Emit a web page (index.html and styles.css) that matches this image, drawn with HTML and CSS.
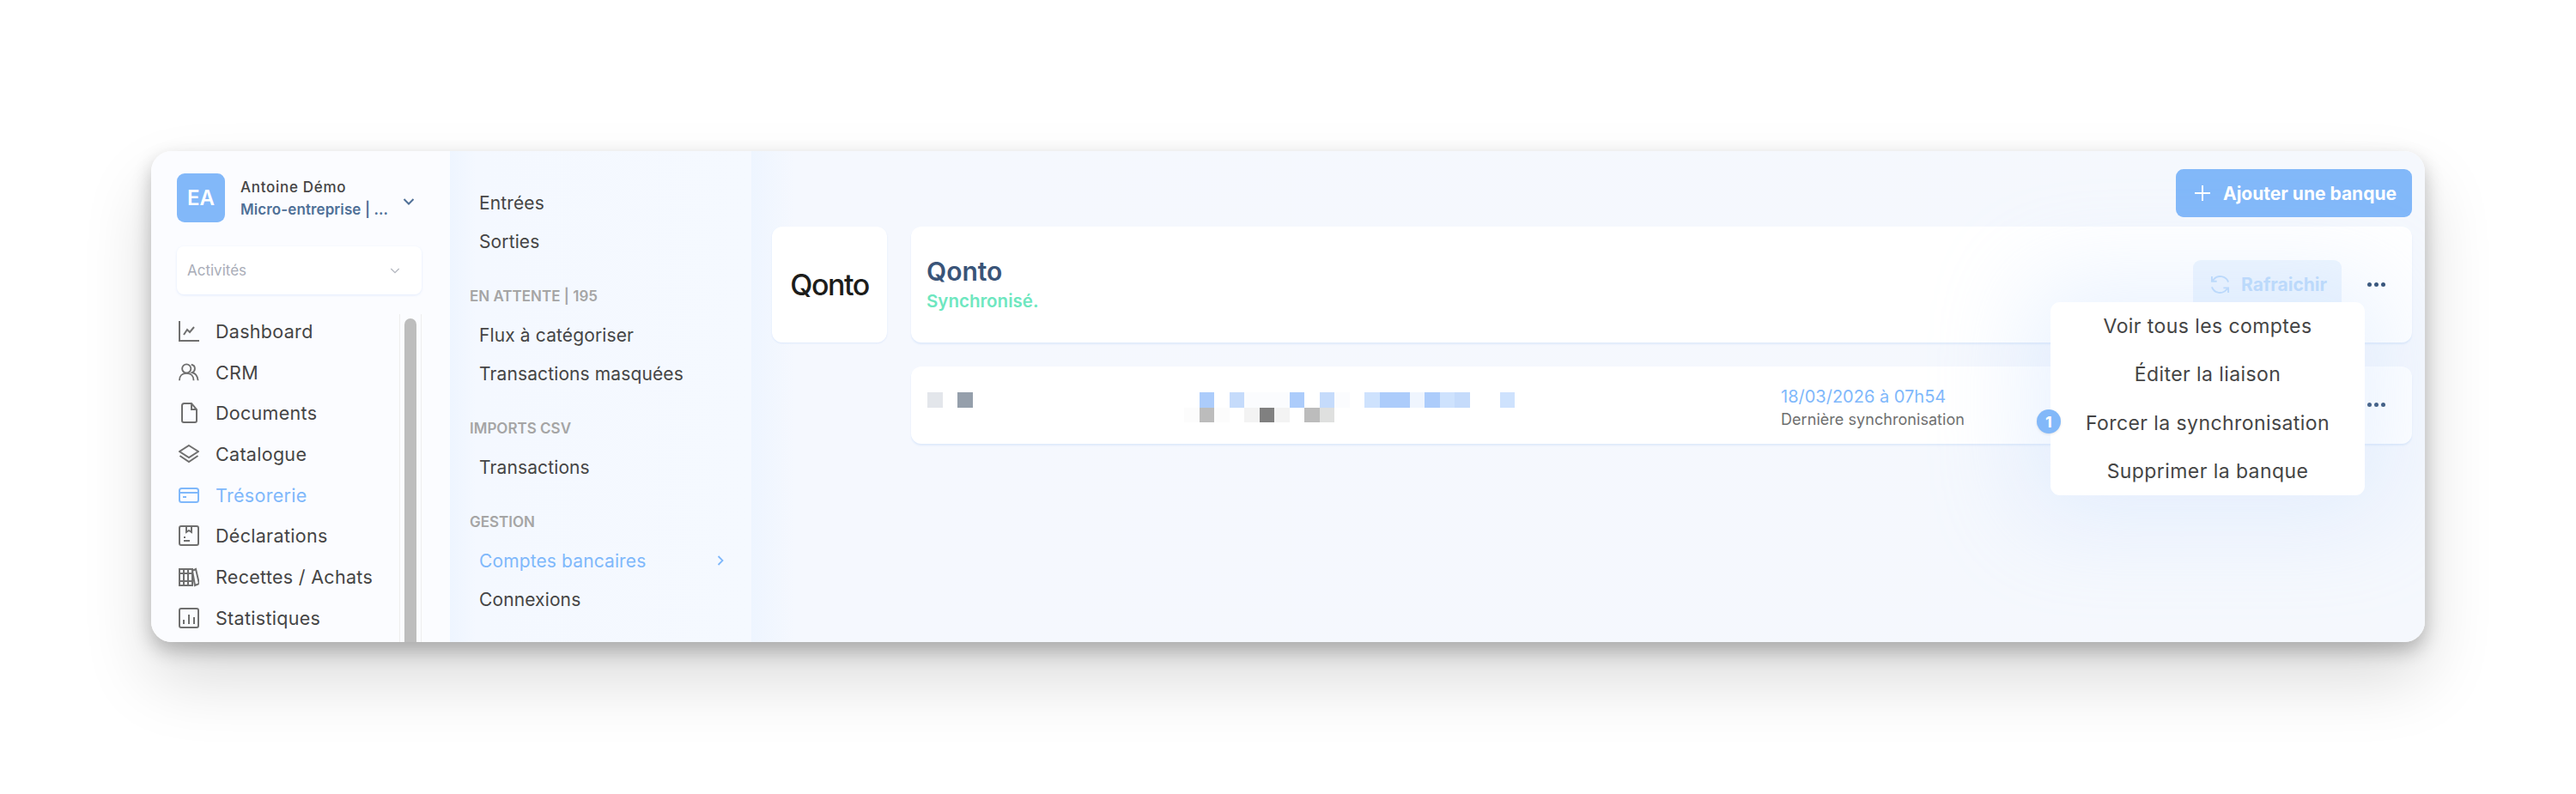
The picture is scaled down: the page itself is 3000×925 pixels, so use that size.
FILE: index.html
```html
<!DOCTYPE html>
<html lang="fr">
<head>
    <meta charset="UTF-8">
    <title>Comptes bancaires</title>
    <link rel="stylesheet" href="styles.css">
</head>
<body>
    <div class="window">
    <div class="app">
        <aside class="sidebar">
            <div class="account">
                <div class="avatar">EA</div>
                <div class="account-text">
                    <div class="account-name">Antoine Démo</div>
                    <div class="account-type">Micro-entreprise | ...</div>
                </div>
                <svg class="account-chevron" viewBox="0 0 14 10"><path d="M1.500 2 7 7.500 12.500 2"/></svg>
            </div>
            <div class="select">
                <span>Activités</span>
                <svg class="select-chevron" viewBox="0 0 14 10"><path d="M1.500 2 7 7.500 12.500 2"/></svg>
            </div>
            <div class="nav-wrap">
                <nav class="nav">
                    <a class="nav-item">
                        <svg viewBox="0 0 24 24"><path d="M1 0v23h23M6 16l4-6 3 3 5-6"/></svg>
                        Dashboard
                    </a>
                    <a class="nav-item">
                        <svg viewBox="0 0 26 24"><circle cx="10" cy="7" r="5.500"/><path d="M1 22c0-6 4-9 9-9s9 3 9 9M16 2c3 .5 4.500 2.500 4.500 5s-1.500 4-3.500 5c4 1 7 4 7.500 10"/></svg>
                        CRM
                    </a>
                    <a class="nav-item">
                        <svg viewBox="0 0 24 24"><path d="M4 3.500A2.500 2.500 0 0 1 6.500 1H15l6 7v13a2 2 0 0 1-2 2H6a2 2 0 0 1-2-2zM15 1v7h6"/></svg>
                        Documents
                    </a>
                    <a class="nav-item">
                        <svg viewBox="0 0 24 24"><path d="M12 2 23 9 12 16 1 9zM1.500 14 12 21 22.500 14"/></svg>
                        Catalogue
                    </a>
                    <a class="nav-item active">
                        <svg viewBox="0 0 24 24"><rect x="1" y="4" width="22" height="16" rx="2.500"/><path d="M1 9h22M5 14h4"/></svg>
                        Trésorerie
                    </a>
                    <a class="nav-item">
                        <svg viewBox="0 0 24 24"><rect x="1" y="1" width="22" height="22" rx="2"/><path d="M9 1v7l3-2 3 2V1M6 14h2M6 18h7"/></svg>
                        Déclarations
                    </a>
                    <a class="nav-item">
                        <svg viewBox="0 0 24 24"><path d="M1 3h15v19H1zM1 8h15M1 17h15M6 3v19M11 3v19M16 5l4-2 4 17-5 2z"/></svg>
                        Recettes / Achats
                    </a>
                    <a class="nav-item">
                        <svg viewBox="0 0 24 24"><rect x="1" y="1" width="22" height="22" rx="2"/><path d="M6 14v5M12 8v11M18 11v8"/></svg>
                        Statistiques
                    </a>
                </nav>
                <div class="scrollbar"><div class="scrollbar-thumb"></div></div>
            </div>
        </aside>

        <aside class="subnav">
            <a class="subnav-item">Entrées</a>
            <a class="subnav-item">Sorties</a>
            <div class="subnav-label">EN ATTENTE | 195</div>
            <a class="subnav-item">Flux à catégoriser</a>
            <a class="subnav-item">Transactions masquées</a>
            <div class="subnav-label">IMPORTS CSV</div>
            <a class="subnav-item">Transactions</a>
            <div class="subnav-label">GESTION</div>
            <a class="subnav-item active">
                Comptes bancaires
                <svg class="subnav-chevron" viewBox="0 0 8 14"><path d="M1.500 2 6.500 7 1.500 12"/></svg>
            </a>
            <a class="subnav-item">Connexions</a>
        </aside>

        <main class="main">
            <div class="toolbar">
                <button class="btn-add">
                    <svg viewBox="0 0 18 18"><path d="M9 0v18M0 9h18"/></svg>
                    Ajouter une banque
                </button>
            </div>
            <div class="bank">
                <div class="bank-logo"><span class="qonto-logo">Qonto</span></div>
                <div class="bank-cards">
                    <div class="card bank-head">
                        <div>
                            <div class="bank-name">Qonto</div>
                            <div class="bank-status">Synchronisé.</div>
                        </div>
                        <div class="bank-actions">
                            <button class="btn-refresh">
                                <svg viewBox="0 0 24 24"><path d="M22 9A10.500 10.500 0 0 0 4 6L2 8M2 2v6h6M2 15a10.500 10.500 0 0 0 18 3l2-2M22 22v-6h-6"/></svg>
                                Rafraichir
                            </button>
                            <div class="dots"><i></i><i></i><i></i></div>
                        </div>
                    </div>
                    <div class="card bank-row">
                        <div class="pixels">
                            <i class="px-pale"></i><i></i><i class="px-slate"></i>
                        </div>
                        <div class="pixels pixels-wide">
                            <i></i><i class="b1"></i><i></i><i class="b2"></i><i class="fa"></i><i class="fa"></i><i class="fa"></i><i class="b1"></i><i></i><i class="b2"></i><i class="fa"></i><i></i><i class="b3"></i><i class="b1"></i><i class="b1"></i><i class="b4"></i><i class="b1"></i><i class="b3"></i><i class="b2"></i><i></i><i></i><i class="b3"></i>
                            <i class="g5"></i><i class="g1"></i><i class="g5"></i><i></i><i class="g3"></i><i class="g2"></i><i class="g3"></i><i></i><i class="g1"></i><i class="g4"></i>
                        </div>
                        <div class="sync">
                            <div class="sync-date">18/03/2026 à 07h54</div>
                            <div class="sync-label">Dernière synchronisation</div>
                        </div>
                        <div class="dots"><i></i><i></i><i></i></div>
                    </div>
                </div>
            </div>

            <div class="menu">
                <a class="menu-item">Voir tous les comptes</a>
                <a class="menu-item">Éditer la liaison</a>
                <a class="menu-item">Forcer la synchronisation</a>
                <a class="menu-item">Supprimer la banque</a>
                <span class="badge">1</span>
            </div>
        </main>
    </div>
    </div>
</body>
</html>
```
FILE: styles.css
```css
* { box-sizing: border-box; }

body {
    margin: 0;
    background: #fff;
    font-family: Inter, "Liberation Sans", sans-serif;
    color: #454545;
}

.window {
    height: 572px;
    margin: 176px 176px 177px;
    border-radius: 24px;
    box-shadow: 0 42px 80px rgba(0, 0, 0, .15), 0 10px 22px rgba(0, 0, 0, .24);
}

.app {
    display: flex;
    height: 100%;
    border-radius: 24px;
    overflow: hidden;
}

/* first column */
.sidebar {
    width: 348px;
    flex: none;
    padding: 26px 33px 0 30px;
    background: #fbfcff;
    display: flex;
    flex-direction: column;
}

.account {
    display: flex;
    align-items: center;
    height: 57px;
}

.avatar {
    width: 56px;
    height: 57px;
    border-radius: 9px;
    background: #82b8f9;
    color: #fff;
    font-size: 24px;
    font-weight: 600;
    display: flex;
    align-items: center;
    justify-content: center;
}

.account-text {
    margin-left: 18px;
    flex: 1;
}

.account-name {
    font-size: 17px;
    font-weight: 500;
    line-height: 26px;
    letter-spacing: .7px;
}

.account-type {
    font-size: 17px;
    font-weight: 600;
    line-height: 26px;
    color: #4f7097;
    letter-spacing: .1px;
    white-space: nowrap;
}

.account-chevron {
    width: 14px;
    height: 10px;
    margin: 8px 8px 0 0;
    fill: none;
    stroke: #4f7097;
    stroke-width: 2;
}

.select {
    height: 56px;
    margin: 28px 0 19px;
    padding: 0 25px 0 12px;
    display: flex;
    align-items: center;
    justify-content: space-between;
    background: #fff;
    border-radius: 8px;
    box-shadow: 0 1px 3px rgba(130, 170, 240, .2);
    font-size: 17px;
    color: #a9adb8;
}

.select-chevron {
    width: 12px;
    height: 9px;
    fill: none;
    stroke: #b5b8c0;
    stroke-width: 1.600;
}

.nav-wrap {
    display: flex;
    flex: 1;
    min-height: 0;
}

.nav { flex: 1; }

.nav-item {
    display: flex;
    align-items: center;
    height: 47.700px;
    padding-left: 2px;
    font-size: 21.500px;
    letter-spacing: .3px;
    color: #454545;
}

.nav-item svg {
    width: 24px;
    height: 24px;
    margin-right: 19px;
    flex: none;
    fill: none;
    stroke: #6f6f6f;
    stroke-width: 2;
}

.nav-item.active,
.subnav-item.active { color: #7fb8fb; }

.nav-item.active svg { stroke: #7fb8fb; }

.scrollbar {
    width: 26px;
    height: 400px;
    margin-top: 4px;
    padding: 5px 5px 0;
    border-left: 1.500px solid #eee;
    border-right: 1.500px solid #eee;
}

.scrollbar-thumb {
    height: 100%;
    border-radius: 7px;
    background: #bdbdbd;
}

/* second column */
.subnav {
    width: 351px;
    flex: none;
    padding: 37.500px 34px 0 23px;
    background: linear-gradient(90deg, #eef5ff 0, #f4f8ff 30px, #f5f9ff 100%);
}

.subnav-item {
    display: flex;
    align-items: center;
    justify-content: space-between;
    height: 45px;
    padding-left: 11px;
    font-size: 21px;
    letter-spacing: .12px;
    color: #454545;
}

.subnav-chevron {
    width: 8px;
    height: 14px;
    fill: none;
    stroke: #7fb8fb;
    stroke-width: 1.800;
    margin-right: -2px;
}

.subnav-label {
    height: 24px;
    margin: 29px 0 11px;
    font-size: 17px;
    font-weight: 600;
    line-height: 24px;
    color: #a5a5a5;
}

/* main area */
.main {
    position: relative;
    flex: 1;
    padding: 21px 15px 0 24px;
    background: linear-gradient(90deg, #eef5ff 0, #f5f8fe 50px, #f5f8fd 100%);
}

.toolbar {
    display: flex;
    justify-content: flex-end;
    margin-bottom: 11px;
}

.btn-add {
    display: flex;
    align-items: center;
    width: 275px;
    height: 56px;
    padding: 0 0 0 22px;
    border: none;
    border-radius: 9px;
    background: #82b8f9;
    color: #fff;
    font-family: inherit;
    font-size: 21px;
    font-weight: 700;
}

.btn-add svg {
    width: 18px;
    height: 18px;
    margin-right: 15px;
    fill: none;
    stroke: #fff;
    stroke-width: 2;
}

.bank {
    display: flex;
    gap: 28px;
}

.bank-logo {
    width: 134px;
    height: 135px;
    flex: none;
    display: flex;
    align-items: center;
    justify-content: center;
    background: #fff;
    border-radius: 12px;
    box-shadow: 0 1px 2px rgba(130, 170, 240, .2);
}

.qonto-logo {
    font-size: 34px;
    font-weight: 500;
    letter-spacing: -1.500px;
    color: #1d1d1b;
}

.bank-cards {
    flex: 1;
    display: flex;
    flex-direction: column;
    gap: 28px;
}

.card {
    background: #fff;
    border-radius: 12px;
    box-shadow: 0 2px 2px rgba(130, 170, 240, .18);
}

.bank-head {
    height: 135px;
    padding: 0 31px 0 18px;
    display: flex;
    align-items: center;
    justify-content: space-between;
}

.bank-name {
    font-size: 30px;
    font-weight: 600;
    line-height: 38px;
    color: #3a5478;
}

.bank-status {
    font-size: 20.500px;
    font-weight: 600;
    line-height: 32px;
    color: #6ee7bf;
}

.bank-actions {
    display: flex;
    align-items: center;
    gap: 30px;
}

.btn-refresh {
    display: flex;
    align-items: center;
    width: 173px;
    height: 58px;
    padding: 0 0 0 20px;
    border: none;
    border-radius: 9px;
    background: #edf5fe;
    color: #bcdafb;
    font-family: inherit;
    font-size: 21px;
    font-weight: 700;
}

.btn-refresh svg {
    width: 23px;
    height: 23px;
    margin-right: 13px;
    fill: none;
    stroke: #bcdafb;
    stroke-width: 2;
}

.dots {
    display: flex;
    gap: 3px;
    width: 21px;
}

.dots i {
    width: 5px;
    height: 5px;
    border-radius: 50%;
    background: #2c4a70;
}

.bank-row {
    height: 90px;
    padding: 30px 31px 0 19px;
    display: grid;
    grid-template-columns: 299px 695px 1fr 21px;
    align-items: start;
}

.pixels {
    display: grid;
    grid-template-columns: repeat(3, 17.500px);
    grid-auto-rows: 17.500px;
}

.pixels-wide { grid-template-columns: repeat(22, 17.500px); }

.px-pale { background: #e3e6eb; }
.px-slate { background: #959fab; }
.b1 { background: #acccfb; }
.b2 { background: #c5dbfb; }
.b3 { background: #cee2fd; }
.b4 { background: #eff5fe; }
.fa { background: #fbfcfe; }
.g1 { background: #bcbcbc; }
.g2 { background: #808080; }
.g3 { background: #f3f3f3; }
.g4 { background: #dfe0df; }
.g5 { background: #fcfcfc; }

.sync { margin-top: -9px; }

.sync-date {
    font-size: 20px;
    line-height: 28px;
    color: #7fb8fb;
}

.sync-label {
    font-size: 18px;
    line-height: 26px;
    color: #6f6f6f;
    letter-spacing: .05px;
}

.bank-row .dots { margin-top: 12px; }

/* dropdown over the cards */
.menu {
    position: absolute;
    top: 176px;
    left: 1513px;
    width: 366px;
    height: 225px;
    background: #fff;
    border-radius: 11px;
    box-shadow: 0 0 110px 30px rgba(190, 215, 255, .3);
}

.menu-item {
    display: flex;
    align-items: center;
    justify-content: center;
    height: 56.300px;
    font-size: 23px;
    letter-spacing: .42px;
    color: #454545;
}

.badge {
    position: absolute;
    top: 125px;
    left: -16px;
    width: 28px;
    height: 28px;
    border-radius: 50%;
    background: #82b8f9;
    color: #fff;
    font-size: 18px;
    font-weight: 700;
    display: flex;
    align-items: center;
    justify-content: center;
    box-shadow: 0 1px 3px rgba(0, 0, 0, .1);
}
```
